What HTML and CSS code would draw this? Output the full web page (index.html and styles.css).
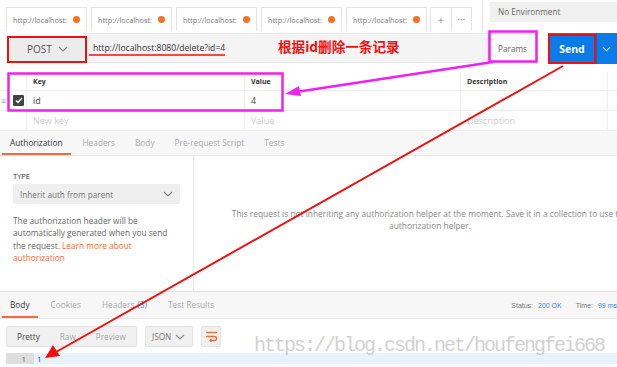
FILE: index.html
```html
<!DOCTYPE html>
<html lang="zh">
<head>
    <meta charset="UTF-8">
    <title>Postman - DELETE request</title>
    <link rel="stylesheet" href="styles.css">
</head>
<body>
    <!-- open request tabs + environment -->
    <div class="tabs-row">
        <div class="tabs">
            <div class="tab"><span>http://localhost:</span><i class="dot"></i></div>
            <div class="tab"><span>http://localhost:</span><i class="dot"></i></div>
            <div class="tab"><span>http://localhost:</span><i class="dot"></i></div>
            <div class="tab"><span>http://localhost:</span><i class="dot"></i></div>
            <div class="tab"><span>http://localhost:</span><i class="dot"></i></div>
            <div class="tab-btns"><span>+</span><span class="more">&bull;&bull;&bull;</span></div>
        </div>
        <div class="env">
            <div class="env-select">No Environment</div>
        </div>
    </div>

    <!-- request line -->
    <div class="request-row">
        <div class="method">
            <span>POST</span>
            <svg class="chev" width="10" height="6" viewBox="0 0 10 6"><polyline points="1,1 5,5 9,1" /></svg>
        </div>
        <div class="url"><span>http://localhost:8080/delete?id=4</span></div>
        <div class="params-btn">Params</div>
        <div class="send">
            <span class="send-main">Send</span>
            <span class="send-more">
                <svg class="chev light" width="9" height="6" viewBox="0 0 10 6"><polyline points="1,1 5,5 9,1" /></svg>
            </span>
        </div>
    </div>

    <!-- query params -->
    <div class="params-table">
        <div class="cell first"></div>
        <div class="cell head">Key</div>
        <div class="cell head">Value</div>
        <div class="cell head">Description</div>
        <div class="cell last"></div>

        <div class="cell first"><span class="handle">&#8801;</span><span class="check"><svg width="8" height="7" viewBox="0 0 8 7"><polyline points="1,3.5 3,5.5 7,1" /></svg></span></div>
        <div class="cell">id</div>
        <div class="cell">4</div>
        <div class="cell"></div>
        <div class="cell last"></div>

        <div class="cell first"></div>
        <div class="cell ph">New key</div>
        <div class="cell ph">Value</div>
        <div class="cell ph">Description</div>
        <div class="cell last"></div>
    </div>

    <!-- request sub tabs -->
    <div class="sub-tabs">
        <span class="sub-tab active">Authorization</span>
        <span class="sub-tab">Headers</span>
        <span class="sub-tab">Body</span>
        <span class="sub-tab">Pre-request Script</span>
        <span class="sub-tab">Tests</span>
    </div>

    <div class="auth">
        <div class="auth-left">
            <div class="type-label">TYPE</div>
            <div class="type-select">
                <span>Inherit auth from parent</span>
                <svg class="chev" width="10" height="6" viewBox="0 0 10 6"><polyline points="1,1 5,5 9,1" /></svg>
            </div>
            <p class="auth-help">The authorization header will be automatically generated when you send the request. <span class="link">Learn more about authorization</span></p>
        </div>
        <div class="auth-right">
            <p>This request is not inheriting any authorization helper at the moment. Save it in a collection to use the authorization helper.</p>
        </div>
    </div>

    <!-- response -->
    <div class="resp-bar">
        <div class="resp-tabs">
            <span class="sub-tab active">Body</span>
            <span class="sub-tab">Cookies</span>
            <span class="sub-tab">Headers <span class="count">(3)</span></span>
            <span class="sub-tab">Test Results</span>
        </div>
        <div class="resp-meta">
            <span>Status: <b>200 OK</b></span>
            <span>Time: <b>99 ms</b></span>
        </div>
    </div>

    <div class="resp-tools">
        <div class="seg">
            <span class="on">Pretty</span>
            <span>Raw</span>
            <span>Preview</span>
        </div>
        <div class="fmt">
            <span>JSON</span>
            <svg class="chev" width="10" height="6" viewBox="0 0 10 6"><polyline points="1,1 5,5 9,1" /></svg>
        </div>
        <div class="wrap-btn">
            <svg width="13" height="11" viewBox="0 0 13 11">
                <line x1="1" y1="1.5" x2="12" y2="1.5" />
                <path d="M1 5.5 H9.5 A2 2 0 0 1 9.5 9.5 H5" />
                <polyline points="6.5,8 5,9.5 6.5,11" />
            </svg>
        </div>
    </div>

    <div class="code-line">
        <span class="gutter">1</span>
        <span class="line">1</span>
    </div>

    <div class="watermark">https://blog.csdn.net/houfengfei668</div>

    <!-- annotations drawn over the screenshot -->
    <div class="note">根据id删除一条记录</div>
    <svg class="annot" width="617" height="367" viewBox="0 0 617 367">
        <rect class="red" x="8" y="37" width="78" height="25" />
        <line class="red thin" x1="89" y1="55" x2="225" y2="55" />
        <rect class="pink" x="489.5" y="31.5" width="47" height="30" />
        <rect class="red" x="549" y="35" width="46" height="28" />
        <rect class="pink" x="8.5" y="73.5" width="274" height="37" />
        <line class="pink" x1="493" y1="62" x2="296" y2="92" />
        <polygon class="pink-fill" points="285,94 299,86 301,96" />
        <line class="red" x1="563" y1="66" x2="56" y2="352" />
        <polygon class="red-fill" points="45,358 53,345 60,356" />
    </svg>
</body>
</html>
```

FILE: styles.css
```css
* {
    box-sizing: border-box;
}

body {
    margin: 0;
    width: 617px;
    height: 367px;
    overflow: hidden;
    position: relative;
    font-family: 'Open Sans', sans-serif;
    color: #333;
    background: #fff;
}

.chev {
    fill: none;
    stroke: #888;
    stroke-width: 1.2;
}

.chev.light {
    stroke: #cfe3fb;
}

/* Tabs row */
.tabs-row {
    display: flex;
    height: 31px;
}

.tabs {
    display: flex;
    gap: 4px;
    padding: 7px 0 0 6px;
}

.tab {
    width: 81px;
    height: 24px;
    border: 1px solid #e3e3e3;
    border-bottom: none;
    display: flex;
    align-items: center;
    justify-content: space-between;
    padding: 0 6px 0 6px;
    font-size: 7.3px;
    color: #777;
}

.dot {
    width: 7px;
    height: 7px;
    border-radius: 50%;
    background: #f47023;
}

.tab-btns {
    display: flex;
    height: 24px;
    margin-left: -1px;
    border: 1px solid #e3e3e3;
    border-bottom: none;
}

.tab-btns span {
    width: 20px;
    display: flex;
    align-items: center;
    justify-content: center;
    font-size: 11px;
    color: #888;
}

.tab-btns .more {
    border-left: 1px solid #e3e3e3;
    font-size: 6px;
    letter-spacing: 0.5px;
}

.env {
    flex: 1;
    margin-left: 10px;
    padding: 2px 0 0 7px;
    border-left: 1px solid #e6e6e6;
}

.env-select {
    height: 20px;
    line-height: 20px;
    padding-left: 8px;
    background: #f0f0f0;
    font-size: 8.2px;
    color: #666;
}

/* Request line */
.request-row {
    display: flex;
    height: 34px;
    padding: 2px 0 0 8px;
}

.method {
    width: 76px;
    height: 26px;
    margin-top: 3px;
    display: flex;
    align-items: center;
    justify-content: space-between;
    padding: 0 16px 0 19px;
    background: #ececec;
    font-size: 10px;
    color: #555;
}

.url {
    width: 404px;
    height: 30px;
    display: flex;
    align-items: center;
    padding-left: 9px;
    background: #f4f4f4;
    border: 1px solid #e8e8e8;
    border-left: none;
    font-size: 8.6px;
    color: #333;
}

.params-btn {
    width: 49px;
    height: 30px;
    display: flex;
    align-items: center;
    justify-content: center;
    background: #fafafa;
    border: 1px solid #e6e6e6;
    font-size: 8.2px;
    color: #666;
}

.send {
    display: flex;
    height: 31px;
    margin-left: 11px;
    flex: 1;
}

.send-main {
    width: 48px;
    display: flex;
    align-items: center;
    justify-content: center;
    background: #0b7bea;
    color: #fff;
    font-weight: bold;
    font-size: 10.5px;
}

.send-more {
    flex: 1;
    display: flex;
    align-items: center;
    padding-left: 5px;
    background: #0b7bea;
    border-left: 1px solid #0a6acb;
}

/* Params table */
.params-table {
    display: grid;
    grid-template-columns: 27px 218px 216px 147px 1fr;
    grid-template-rows: 19px 20px 20px;
    margin-top: 7px;
}

.cell {
    display: flex;
    align-items: center;
    padding-left: 6px;
    border-bottom: 1px solid #ececec;
    border-right: 1px solid #efefef;
    font-size: 9px;
    color: #444;
}

.cell.first {
    padding-left: 1px;
    border-right: 1px solid #efefef;
}

.cell.last {
    border-right: none;
}

.cell.head {
    font-size: 7px;
    font-weight: bold;
    color: #333;
}

.cell.ph {
    color: #ccc;
}

.handle {
    font-size: 9px;
    color: #999;
    width: 12px;
}

.check {
    width: 11px;
    height: 11px;
    display: flex;
    align-items: center;
    justify-content: center;
    background: #444;
    border-radius: 1px;
}

.check svg {
    fill: none;
    stroke: #fff;
    stroke-width: 1.5;
}

/* Sub tabs */
.sub-tabs,
.resp-tabs {
    display: flex;
    padding-left: 2px;
}

.sub-tabs {
    height: 24px;
    margin-top: 1px;
    background: #f7f7f7;
    border-bottom: 1px solid #e6e6e6;
}

.sub-tab {
    display: flex;
    align-items: center;
    padding: 0 8px;
    margin-right: 4px;
    font-size: 8.3px;
    color: #aaa;
    border-bottom: 2px solid transparent;
}

.sub-tab.active {
    color: #333;
    border-bottom-color: #f26b3a;
}

.resp-tabs .sub-tab {
    margin-right: 5px;
}

/* Authorization panel */
.auth {
    display: flex;
    height: 135px;
}

.auth-left {
    width: 194px;
    flex: none;
    padding: 15px 13px 0 13px;
    border-right: 1px solid #e8e8e8;
}

.type-label {
    font-size: 7.5px;
    color: #333;
    line-height: 10px;
}

.type-select {
    height: 20px;
    margin-top: 3px;
    display: flex;
    align-items: center;
    justify-content: space-between;
    padding: 0 7px;
    background: #efefef;
    border-radius: 2px;
    font-size: 8.2px;
    color: #777;
}

.auth-help {
    margin: 11px 0 0 0;
    font-size: 8.3px;
    line-height: 12.3px;
    color: #666;
}

.link {
    color: #f26b3a;
}

.auth-right {
    width: 490px;
    flex: none;
    padding: 52px 44px 0 26px;
    text-align: center;
}

.auth-right p {
    margin: 0;
    font-size: 8.4px;
    line-height: 12px;
    color: #888;
}

/* Response */
.resp-bar {
    display: flex;
    justify-content: space-between;
    height: 28px;
    background: #f7f7f7;
    border-top: 1px solid #e3e3e3;
    border-bottom: 1px solid #e6e6e6;
}

.count {
    color: #4a90e2;
    margin-left: 3px;
}

.resp-meta {
    display: flex;
    align-items: center;
    gap: 14px;
    margin-right: 0;
    font-family: 'Liberation Sans', sans-serif;
    font-size: 7px;
    color: #777;
}

.resp-meta b {
    font-weight: normal;
    color: #2a8ce4;
    margin-left: 3px;
}

.resp-tools {
    display: flex;
    gap: 8px;
    padding: 7px 0 0 6px;
}

.seg,
.fmt,
.wrap-btn {
    height: 21px;
    display: flex;
    align-items: center;
    background: #f0f0f0;
    border: 1px solid #e2e2e2;
    border-radius: 2px;
    font-size: 8.2px;
}

.seg {
    width: 131px;
}

.seg span {
    padding-left: 10px;
    margin-right: 10px;
    color: #aaa;
}

.seg span.on {
    color: #444;
}

.fmt {
    width: 48px;
    justify-content: space-between;
    padding: 0 7px 0 6px;
    color: #777;
}

.wrap-btn {
    width: 20px;
    justify-content: center;
}

.wrap-btn svg {
    fill: none;
    stroke: #f26b3a;
    stroke-width: 1.4;
}

.code-line {
    display: flex;
    height: 11px;
    margin: 6px 0 0 6px;
    font-size: 8px;
    line-height: 11px;
}

.gutter {
    width: 28px;
    padding-right: 8px;
    text-align: right;
    background: #dedede;
    color: #666;
}

.line {
    flex: 1;
    padding-left: 3px;
    background: #e8f2fd;
    color: #3b3fa8;
}

.watermark {
    position: absolute;
    left: 254px;
    top: 334px;
    font-family: 'Liberation Mono', monospace;
    font-size: 20px;
    letter-spacing: -2px;
    color: rgba(170, 170, 170, 0.55);
}

/* Annotation overlay */
.note {
    position: absolute;
    left: 278px;
    top: 36px;
    font-family: 'Noto Sans CJK SC', sans-serif;
    font-size: 13.6px;
    font-weight: bold;
    color: #f21010;
}

.annot {
    position: absolute;
    left: 0;
    top: 0;
    pointer-events: none;
}

.annot .red {
    fill: none;
    stroke: #f01010;
    stroke-width: 2;
}

.annot .red.thin {
    stroke-width: 1.5;
}

.annot .pink {
    fill: none;
    stroke: #f020f0;
    stroke-width: 2.5;
}

.annot .pink-fill {
    fill: #f020f0;
}

.annot .red-fill {
    fill: #f01010;
}
```
